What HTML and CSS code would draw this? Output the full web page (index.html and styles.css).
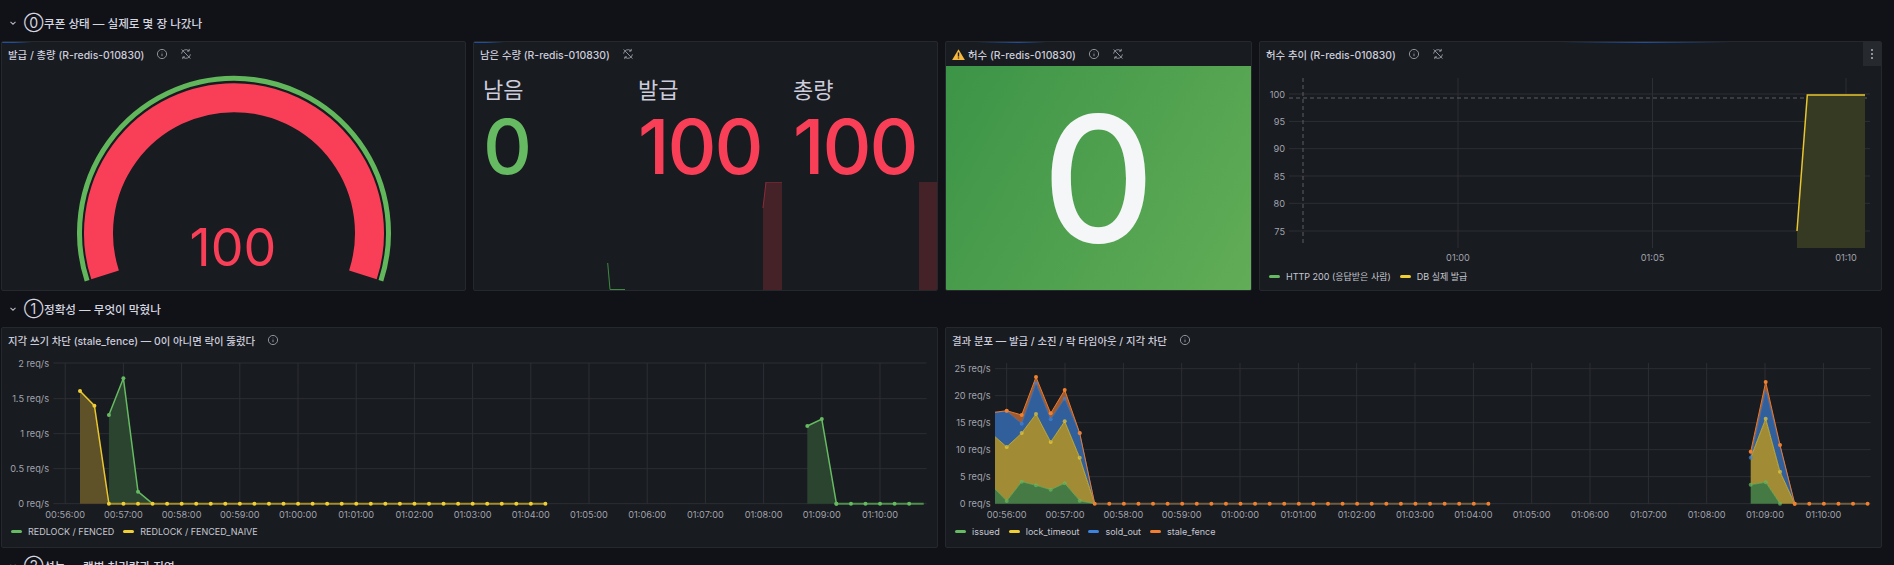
FILE: index.html
```html
<!DOCTYPE html>
<html>
	<head>
		<meta charset="UTF-8">
		<title>R-redis-010830</title>
		<link rel="stylesheet" href="styles.css">
	</head>
	<body>
		<svg class="defs" width="0" height="0">
			<symbol id="i-info" viewBox="0 0 12 12">
				<circle cx="6" cy="6" r="4.6"/>
				<path d="M6 5.6v2.6M6 3.7v.5"/>
			</symbol>
			<symbol id="i-sync" viewBox="0 0 12 12">
				<path d="M1.6 5.6a4.4 4.4 0 0 1 7.3-2.8M10.4 6.4a4.4 4.4 0 0 1-7.3 2.8"/>
				<path d="M9.2.9v2.2H7M2.8 11.1V8.9H5"/>
				<path d="M1.6 1.4l8.8 9.2"/>
			</symbol>
			<marker id="dot-g" markerUnits="userSpaceOnUse" markerWidth="6" markerHeight="6" refX="3" refY="3"><circle class="c-green" cx="3" cy="3" r="2"/></marker>
			<marker id="dot-y" markerUnits="userSpaceOnUse" markerWidth="6" markerHeight="6" refX="3" refY="3"><circle class="c-yellow" cx="3" cy="3" r="2"/></marker>
			<marker id="dot-b" markerUnits="userSpaceOnUse" markerWidth="6" markerHeight="6" refX="3" refY="3"><circle class="c-blue" cx="3" cy="3" r="2"/></marker>
			<marker id="dot-o" markerUnits="userSpaceOnUse" markerWidth="6" markerHeight="6" refX="3" refY="3"><circle class="c-orange" cx="3" cy="3" r="2"/></marker>
		</svg>

		<div class="dash">
			<div class="row-head first">
				<svg class="chev" viewBox="0 0 8 8"><path d="M1.5 2.8L4 5.2l2.5-2.4"/></svg>
				<span class="num">⓪</span>
				<span>쿠폰 상태 — 실제로 몇 장 나갔나</span>
			</div>

			<div class="top-grid">
				<div class="panel">
					<i class="load load-a"></i>
					<div class="p-title">
						<span>발급 / 총량 (R-redis-010830)</span>
						<svg class="ic"><use href="#i-info"/></svg>
						<svg class="ic"><use href="#i-sync"/></svg>
					</div>
					<svg class="chart" width="463" height="224" viewBox="2 66 463 224">
						<path class="g-thresh" d="M87.1 280.7A154.5 154.5 0 1 1 380.9 280.7"/>
						<path class="g-value" d="M105.1 274.9A135.5 135.5 0 1 1 362.9 274.9"/>
						<text class="g-text" x="233" y="266">100</text>
					</svg>
				</div>

				<div class="panel">
					<i class="load load-a"></i>
					<div class="p-title">
						<span>남은 수량 (R-redis-010830)</span>
						<svg class="ic"><use href="#i-sync"/></svg>
					</div>
					<svg class="spark" width="463" height="108" viewBox="474 182 463 108">
						<path class="spark-r" d="M763 208L766 182H782V290H763Z"/>
						<path class="spark-r" d="M919 182H937V290H919Z"/>
						<path class="line-r" d="M763 208L766 182H782"/>
						<path class="line-g" d="M607.7 263L610 289.5H625"/>
					</svg>
					<div class="stats">
						<div class="stat">
							<div class="stat-label">남음</div>
							<div class="stat-val ok">0</div>
						</div>
						<div class="stat">
							<div class="stat-label">발급</div>
							<div class="stat-val bad">100</div>
						</div>
						<div class="stat">
							<div class="stat-label">총량</div>
							<div class="stat-val bad">100</div>
						</div>
					</div>
				</div>

				<div class="panel">
					<i class="load load-b"></i>
					<div class="p-title">
						<svg class="warn" viewBox="0 0 13 11">
							<path class="warn-bg" d="M6.5.3L12.9 11H.1Z"/>
							<path class="warn-mark" d="M6.5 3.6v4M6.5 8.6v1"/>
						</svg>
						<span>허수 (R-redis-010830)</span>
						<svg class="ic"><use href="#i-info"/></svg>
						<svg class="ic"><use href="#i-sync"/></svg>
					</div>
					<div class="big-stat">0</div>
				</div>

				<div class="panel">
					<i class="load load-c"></i>
					<div class="p-title">
						<span>허수 추이 (R-redis-010830)</span>
						<svg class="ic"><use href="#i-info"/></svg>
						<svg class="ic"><use href="#i-sync"/></svg>
					</div>
					<button class="kebab">
						<svg viewBox="0 0 4 12" width="4" height="12"><circle cx="2" cy="2" r=".9"/><circle cx="2" cy="6" r=".9"/><circle cx="2" cy="10" r=".9"/></svg>
					</button>
					<svg class="chart" width="621" height="199" viewBox="1260 66 621 199">
						<path class="grid" d="M1289 94H1870M1289 121.4H1870M1289 148.7H1870M1289 176H1870M1289 203.3H1870M1289 231H1870"/>
						<path class="grid" d="M1458 78V248M1652.5 78V248M1846 78V248"/>
						<path class="dash-line" d="M1303 78V246M1289 98H1870"/>
						<path class="fill-y4" d="M1797 248V231L1807.3 95H1865V248Z"/>
						<path class="l-yellow w15" d="M1797 231L1807.3 95H1865"/>
						<g class="axis-y">
							<text x="1285" y="94">100</text>
							<text x="1285" y="121.4">95</text>
							<text x="1285" y="148.7">90</text>
							<text x="1285" y="176">85</text>
							<text x="1285" y="203.3">80</text>
							<text x="1285" y="231">75</text>
						</g>
						<g class="axis-x">
							<text x="1458" y="257">01:00</text>
							<text x="1652.5" y="257">01:05</text>
							<text x="1846" y="257">01:10</text>
						</g>
					</svg>
					<div class="legend top-legend">
						<span class="leg"><i class="bg-green"></i>HTTP 200 (응답받은 사람)</span>
						<span class="leg"><i class="bg-yellow"></i>DB 실제 발급</span>
					</div>
				</div>
			</div>

			<div class="row-head">
				<svg class="chev" viewBox="0 0 8 8"><path d="M1.5 2.8L4 5.2l2.5-2.4"/></svg>
				<span class="num">①</span>
				<span>정확성 — 무엇이 막혔나</span>
			</div>

			<div class="mid-grid">
				<div class="panel">
					<div class="p-title">
						<span>지각 쓰기 차단 (stale_fence) — 0이 아니면 락이 뚫렸다</span>
						<svg class="ic"><use href="#i-info"/></svg>
					</div>
					<svg class="chart" width="935" height="169" viewBox="2 352 935 169">
						<path class="grid" d="M53.4 363H926.5M53.4 398.7H926.5M53.4 433.7H926.5M53.4 468.7H926.5M53.4 503.7H926.5"/>
						<path class="grid" d="M65.2 363V504M123.4 363V504M181.6 363V504M239.8 363V504M298 363V504M356.2 363V504M414.4 363V504M472.6 363V504M530.8 363V504M589 363V504M647.2 363V504M705.4 363V504M763.6 363V504M821.8 363V504M880 363V504"/>
						<path class="fill-g" d="M108.9 503.7V415L123.4 378.3L138 491.7L152.5 503.7Z"/>
						<path class="fill-g" d="M807.3 503.7V426L821.8 419L836.4 503.7Z"/>
						<path class="fill-y" d="M80 503.7V391L94.4 405.7L108.9 503.7Z"/>
						<polyline class="l-green w15" points="108.9,415 123.4,378.3 138,491.7 152.5,503.7" marker-start="url(#dot-g)" marker-mid="url(#dot-g)"/>
						<polyline class="l-green w15" points="807.3,426 821.8,419 836.4,503.7" marker-start="url(#dot-g)" marker-mid="url(#dot-g)" marker-end="url(#dot-g)"/>
						<path class="base-g" d="M836.4 503.7H923.7"/>
						<path class="dots-g" d="M836.4 503.7H923.7"/>
						<path class="base-y" d="M108.9 503.7H545.3"/>
						<polyline class="l-yellow w15" points="80,391 94.4,405.7 108.9,503.7" marker-start="url(#dot-y)" marker-mid="url(#dot-y)"/>
						<path class="dots-y" d="M108.9 503.7H545.4"/>
						<g class="axis-y">
							<text x="49" y="363">2 req/s</text>
							<text x="49" y="398.7">1.5 req/s</text>
							<text x="49" y="433.7">1 req/s</text>
							<text x="49" y="468.7">0.5 req/s</text>
							<text x="49" y="503.7">0 req/s</text>
						</g>
						<g class="axis-x">
							<text x="65.2" y="514">00:56:00</text>
							<text x="123.4" y="514">00:57:00</text>
							<text x="181.6" y="514">00:58:00</text>
							<text x="239.8" y="514">00:59:00</text>
							<text x="298" y="514">01:00:00</text>
							<text x="356.2" y="514">01:01:00</text>
							<text x="414.4" y="514">01:02:00</text>
							<text x="472.6" y="514">01:03:00</text>
							<text x="530.8" y="514">01:04:00</text>
							<text x="589" y="514">01:05:00</text>
							<text x="647.2" y="514">01:06:00</text>
							<text x="705.4" y="514">01:07:00</text>
							<text x="763.6" y="514">01:08:00</text>
							<text x="821.8" y="514">01:09:00</text>
							<text x="880" y="514">01:10:00</text>
						</g>
					</svg>
					<div class="legend">
						<span class="leg"><i class="bg-green"></i>REDLOCK / FENCED</span>
						<span class="leg"><i class="bg-yellow"></i>REDLOCK / FENCED_NAIVE</span>
					</div>
				</div>

				<div class="panel">
					<div class="p-title">
						<span>결과 분포 — 발급 / 소진 / 락 타임아웃 / 지각 차단</span>
						<svg class="ic"><use href="#i-info"/></svg>
					</div>
					<svg class="chart" width="935" height="169" viewBox="946 352 935 169">
						<path class="grid" d="M995 368.7H1870.7M995 395.7H1870.7M995 422.7H1870.7M995 449.7H1870.7M995 476.7H1870.7M995 503.7H1870.7"/>
						<path class="grid" d="M1006.7 363V504M1065 363V504M1123.4 363V504M1181.7 363V504M1240 363V504M1298.4 363V504M1356.7 363V504M1415 363V504M1473.4 363V504M1531.7 363V504M1590 363V504M1648.4 363V504M1706.7 363V504M1765 363V504M1823.4 363V504"/>

						<polygon class="area-g" points="995,503.7 995,489 1006.7,501 1021.7,481.7 1036,485.3 1050.7,489.7 1064.7,483.3 1079.7,500.7 1094.7,503.7"/>
						<polygon class="area-y" points="995,489 1006.7,501 1021.7,481.7 1036,485.3 1050.7,489.7 1064.7,483.3 1079.7,500.7 1094.7,503.7 1079.7,457.7 1064.7,421.3 1050.7,442 1036,414 1021.7,433 1006.7,447 995,436.7"/>
						<polygon class="area-b" points="995,436.7 1006.7,447 1021.7,433 1036,414 1050.7,442 1064.7,421.3 1079.7,457.7 1094.7,503.7 1079.7,433.3 1064.7,398.7 1050.7,419.3 1036,383.3 1021.7,423.7 1006.7,411.3 995,412.3"/>
						<polygon class="area-o" points="995,412.3 1006.7,411.3 1021.7,423.7 1036,383.3 1050.7,419.3 1064.7,398.7 1079.7,433.3 1094.7,503.7 1079.7,433 1064.7,390 1050.7,413.3 1036,377 1021.7,415 1006.7,410.7"/>
						<polyline class="l-green soft" points="995,489 1006.7,501 1021.7,481.7 1036,485.3 1050.7,489.7 1064.7,483.3 1079.7,500.7 1094.7,503.7" marker-mid="url(#dot-g)"/>
						<polyline class="l-yellow soft" points="995,436.7 1006.7,447 1021.7,433 1036,414 1050.7,442 1064.7,421.3 1079.7,457.7 1094.7,503.7" marker-mid="url(#dot-y)"/>
						<polyline class="l-blue soft" points="995,412.3 1006.7,411.3 1021.7,423.7 1036,383.3 1050.7,419.3 1064.7,398.7 1079.7,433.3 1094.7,503.7" marker-mid="url(#dot-b)"/>
						<polyline class="l-orange" points="995,412.3 1006.7,410.7 1021.7,415 1036,377 1050.7,413.3 1064.7,390 1079.7,433 1094.7,503.7" marker-mid="url(#dot-o)"/>

						<polygon class="area-g" points="1750.7,503.7 1750.7,484.7 1765.7,482.3 1780,503.7"/>
						<polygon class="area-y" points="1750.7,484.7 1765.7,482.3 1780,503.7 1794.7,503.7 1780,471.7 1765.7,418.7 1750.7,457.7"/>
						<polygon class="area-b" points="1750.7,457.7 1765.7,418.7 1780,471.7 1794.7,503.7 1780,446 1765.7,390"/>
						<polygon class="area-o" points="1750.7,457.7 1765.7,390 1780,446 1794.7,503.7 1780,445 1765.7,382 1750.7,451.7"/>
						<polyline class="l-green soft" points="1750.7,484.7 1765.7,482.3 1780,503.7" marker-start="url(#dot-g)" marker-mid="url(#dot-g)" marker-end="url(#dot-g)"/>
						<polyline class="l-yellow soft" points="1750.7,457.7 1765.7,418.7 1780,471.7 1794.7,503.7" marker-mid="url(#dot-y)"/>
						<polyline class="l-blue soft" points="1750.7,457.7 1765.7,390 1780,446 1794.7,503.7" marker-start="url(#dot-b)"/>
						<polyline class="l-orange" points="1750.7,451.7 1765.7,382 1780,445 1794.7,503.7" marker-start="url(#dot-o)" marker-mid="url(#dot-o)" marker-end="url(#dot-o)"/>

						<path class="base-o" d="M1094.7 503.7H1488.4M1794.7 503.7H1867.7"/>
						<path class="dots-o" d="M1094.7 503.7H1488.5M1794.7 503.7H1867.8"/>
						<g class="axis-y">
							<text x="990.7" y="368.7">25 req/s</text>
							<text x="990.7" y="395.7">20 req/s</text>
							<text x="990.7" y="422.7">15 req/s</text>
							<text x="990.7" y="449.7">10 req/s</text>
							<text x="990.7" y="476.7">5 req/s</text>
							<text x="990.7" y="503.7">0 req/s</text>
						</g>
						<g class="axis-x">
							<text x="1006.7" y="514">00:56:00</text>
							<text x="1065" y="514">00:57:00</text>
							<text x="1123.4" y="514">00:58:00</text>
							<text x="1181.7" y="514">00:59:00</text>
							<text x="1240" y="514">01:00:00</text>
							<text x="1298.4" y="514">01:01:00</text>
							<text x="1356.7" y="514">01:02:00</text>
							<text x="1415" y="514">01:03:00</text>
							<text x="1473.4" y="514">01:04:00</text>
							<text x="1531.7" y="514">01:05:00</text>
							<text x="1590" y="514">01:06:00</text>
							<text x="1648.4" y="514">01:07:00</text>
							<text x="1706.7" y="514">01:08:00</text>
							<text x="1765" y="514">01:09:00</text>
							<text x="1823.4" y="514">01:10:00</text>
						</g>
					</svg>
					<div class="legend">
						<span class="leg"><i class="bg-green"></i>issued</span>
						<span class="leg"><i class="bg-yellow"></i>lock_timeout</span>
						<span class="leg"><i class="bg-blue"></i>sold_out</span>
						<span class="leg"><i class="bg-orange"></i>stale_fence</span>
					</div>
				</div>
			</div>

			<div class="row-head">
				<svg class="chev" viewBox="0 0 8 8"><path d="M1.5 2.8L4 5.2l2.5-2.4"/></svg>
				<span class="num">②</span>
				<span>성능 — 랩별 처리량과 지연</span>
			</div>
		</div>
	</body>
</html>
```

FILE: styles.css
```css
html,body{
	margin:0;
	height:565px;
	overflow:hidden;
}
body{
	background:#111217;
	color:#ccccdc;
	font-family:Inter,"Noto Sans CJK KR",sans-serif;
}
.defs{
	position:absolute;
}
.dash{
	padding:5px 12px 0 1px;
}
.row-head{
	height:36px;
	display:flex;
	align-items:center;
	padding-left:8px;
	font-size:11.6px;
	font-weight:500;
	color:#d5d6e0;
}
.chev{
	flex:none;
	width:8px;
	height:8px;
	margin-right:7px;
	fill:none;
	stroke:#b4b5c0;
	stroke-width:1.1;
}
.num{
	flex:none;
	width:16px;
	margin-right:4px;
	font-size:14px;
	line-height:16px;
	font-weight:400;
	text-align:center;
}
.top-grid{
	display:grid;
	grid-template-columns:465px 465px 307px 623px;
	column-gap:7px;
	height:250px;
}
.mid-grid{
	display:grid;
	grid-template-columns:937px 937px;
	column-gap:7px;
	height:221px;
}

/* panel */
.panel{
	position:relative;
	display:flex;
	flex-direction:column;
	box-sizing:border-box;
	background:#181b1f;
	border:1px solid #25282d;
	border-radius:2px;
	overflow:hidden;
}
.load{
	position:absolute;
	top:-1px;
	height:2px;
	background:linear-gradient(90deg,#1f4f9e,#1f4f9e 40%,rgba(31,79,158,0));
}
.load-a{
	left:0;
	width:30px;
}
.load-b{
	left:30px;
	width:70px;
	background:linear-gradient(90deg,rgba(31,79,158,0),#1f4f9e 60%,rgba(31,79,158,0));
}
.load-c{
	left:300px;
	width:170px;
	background:linear-gradient(90deg,rgba(31,79,158,0),#1f4f9e 50%,rgba(31,79,158,0));
}
.p-title{
	flex:none;
	height:24px;
	display:flex;
	align-items:center;
	padding-left:6px;
	font-size:10.4px;
	font-weight:500;
	white-space:nowrap;
	color:#ccccdc;
}
.ic{
	width:12px;
	height:12px;
	margin-left:12px;
	fill:none;
	stroke:#9c9da8;
	stroke-width:.9;
}
.warn{
	width:13px;
	height:11px;
	margin-right:3px;
}
.warn-bg{
	fill:#f5b73d;
}
.warn-mark{
	stroke:#181b1f;
	stroke-width:1.4;
	fill:none;
}
.kebab{
	position:absolute;
	top:0;
	right:0;
	width:18px;
	height:24px;
	padding:0;
	border:0;
	background:#26292e;
	display:flex;
	align-items:center;
	justify-content:center;
}
.kebab svg{
	fill:#c4c5cf;
}
.chart{
	display:block;
	flex:none;
}

/* gauge */
.g-thresh{
	fill:none;
	stroke:#62b65c;
	stroke-width:5;
}
.g-value{
	fill:none;
	stroke:#f83f57;
	stroke-width:29;
}
.g-text{
	fill:#f83f57;
	font-size:52px;
	text-anchor:middle;
}

/* stat */
.stats{
	position:relative;
	display:grid;
	grid-template-columns:155px 155px 1fr;
	padding:10px 0 0 9px;
}
.stat-label{
	font-size:22px;
	line-height:28px;
	color:#ccccdc;
}
.stat-val{
	margin-top:2px;
	font-size:76px;
	line-height:80px;
	letter-spacing:-2px;
	font-weight:500;
}
.ok{
	color:#66ba62;
}
.bad{
	color:#f83f57;
}
.spark{
	position:absolute;
	left:0;
	bottom:0;
}
.spark-r{
	fill:#452227;
}
.line-r{
	fill:none;
	stroke:#8e2b3b;
	stroke-width:1;
}
.line-g{
	fill:none;
	stroke:#3e8a42;
	stroke-width:1;
}
.big-stat{
	flex:1;
	display:flex;
	align-items:center;
	justify-content:center;
	margin:0 -1px -1px;
	background:linear-gradient(120deg,#3c9447,#62ad57);
	color:#f5f6f8;
	font-size:175px;
	font-weight:500;
	line-height:1;
}

/* time series */
.grid{
	fill:none;
	stroke:#2c2f34;
	stroke-width:1;
}
.dash-line{
	fill:none;
	stroke:#5c5e66;
	stroke-width:1;
	stroke-dasharray:4 3;
}
.axis-y text,.axis-x text{
	fill:#a2a3ae;
	font-size:9.2px;
	dominant-baseline:central;
}
.axis-y text{
	text-anchor:end;
}
.axis-x text{
	text-anchor:middle;
}
.l-green,.l-yellow,.l-blue,.l-orange{
	fill:none;
	stroke-width:1;
}
.w15{
	stroke-width:1.5;
}
.soft{
	opacity:.7;
}
.l-green{
	stroke:#66ba62;
}
.l-yellow{
	stroke:#e8c62f;
}
.l-blue{
	stroke:#3d7fd6;
}
.l-orange{
	stroke:#e8792f;
}
.c-green{
	fill:#66ba62;
}
.c-yellow{
	fill:#f0ce35;
}
.c-blue{
	fill:#3d84e0;
}
.c-orange{
	fill:#f0802f;
}
.fill-g{
	fill:#2b4430;
}
.fill-y{
	fill:#5f5229;
}
.fill-y4{
	fill:#373a22;
}
.area-g{
	fill:#457a45;
}
.area-y{
	fill:#a18c35;
}
.area-b{
	fill:#305f9b;
}
.area-o{
	fill:#a05c30;
}
.base-g{
	stroke:#4e8f4c;
	stroke-width:2;
}
.base-y{
	stroke:#a48d2b;
	stroke-width:2;
}
.base-o{
	stroke:#6f5c42;
	stroke-width:2;
}
.dots-g,.dots-y,.dots-o{
	fill:none;
	stroke-width:4;
	stroke-linecap:round;
}
.dots-g{
	stroke:#66ba62;
	stroke-dasharray:0 14.55;
}
.dots-y{
	stroke:#f0ce35;
	stroke-dasharray:0 14.55;
}
.dots-o{
	stroke:#f0802f;
	stroke-dasharray:0 14.58;
}

/* legend */
.legend{
	flex:none;
	height:21px;
	padding:0 0 5px 9px;
	display:flex;
	align-items:center;
	gap:9px;
	font-size:9px;
	color:#c6c7d2;
	white-space:nowrap;
}
.top-legend{
	height:22px;
	padding-bottom:3px;
}
.leg{
	display:flex;
	align-items:center;
	gap:6px;
}
.leg i{
	width:11px;
	height:3px;
	border-radius:2px;
}
.bg-green{
	background:#66ba62;
}
.bg-yellow{
	background:#f0ce35;
}
.bg-blue{
	background:#3d84e0;
}
.bg-orange{
	background:#f0802f;
}
```
